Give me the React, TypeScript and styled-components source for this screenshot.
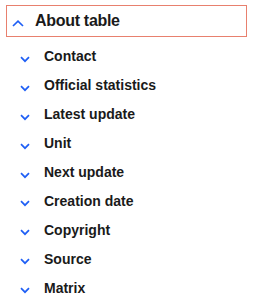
import React from 'react';
import styled, { createGlobalStyle } from 'styled-components';

const blue = '#1f5ff5';
const ink = '#1a1a1a';
const salmon = '#e8806e';

const GlobalStyle = createGlobalStyle`
  body {
    margin: 0;
    background: #fff;
    font-family: "Liberation Sans", Arial, sans-serif;
  }
`;

const Panel = styled.div`
  padding: 5px 12px 0 6px;
  width: 241px;
`;

const Header = styled.div`
  display: flex;
  align-items: center;
  height: 30px;
  border: 1px solid ${salmon};
  padding-left: 5px;
`;

const HeaderTitle = styled.span`
  font-size: 16px;
  letter-spacing: -0.3px;
  font-weight: 700;
  color: ${ink};
  margin-left: 11px;
`;

const List = styled.ul`
  list-style: none;
  margin: 5px 0 0;
  padding: 0 0 0 14px;
`;

const Item = styled.li`
  display: flex;
  align-items: center;
  height: 28.9px;
`;

const Label = styled.span`
  font-size: 14px;
  font-weight: 700;
  color: ${ink};
  margin-left: 14px;
`;

const Chevron = ({ up }: { up?: boolean }) => (
  <svg
    width={up ? 12 : 10}
    height="7"
    viewBox={up ? '0 0 12 7' : '0 0 10 7'}
    style={{ marginTop: up ? 5 : 6 }}
  >
    <path
      d={up ? 'M1 6 L6 1.2 L11 6' : 'M1 1.2 L5 5.2 L9 1.2'}
      fill="none"
      stroke={blue}
      strokeWidth="1.7"
    />
  </svg>
);

const items = [
  'Contact',
  'Official statistics',
  'Latest update',
  'Unit',
  'Next update',
  'Creation date',
  'Copyright',
  'Source',
  'Matrix',
];

export default function App() {
  return (
    <>
      <GlobalStyle />
      <Panel>
        <Header>
          <Chevron up />
          <HeaderTitle>About table</HeaderTitle>
        </Header>
        <List>
          {items.map((t) => (
            <Item key={t}>
              <Chevron />
              <Label>{t}</Label>
            </Item>
          ))}
        </List>
      </Panel>
    </>
  );
}
